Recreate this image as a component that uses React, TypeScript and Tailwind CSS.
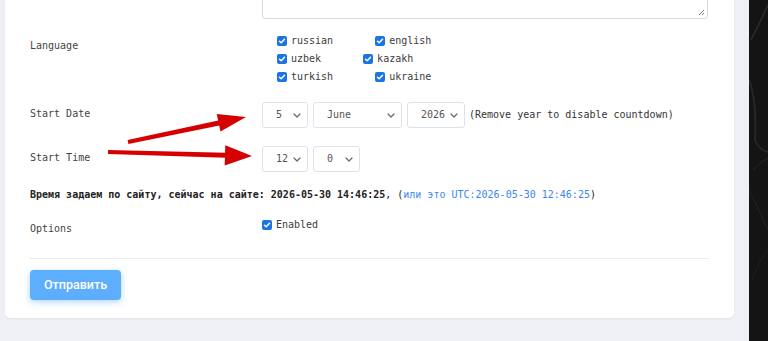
import React from "react";

function Check({ className = "" }: { className?: string }) {
  return (
    <span className={"inline-flex items-center justify-center w-[10px] h-[10px] rounded-[2px] bg-[#1b74e4] shrink-0 " + className}>
      <svg width="8" height="8" viewBox="0 0 8 8">
        <path d="M1.5 4.2 L3.2 5.8 L6.5 2.2" fill="none" stroke="#fff" strokeWidth="1.5" strokeLinecap="round" strokeLinejoin="round" />
      </svg>
    </span>
  );
}

function CheckItem({ label }: { label: string }) {
  return (
    <span className="inline-flex items-center gap-[4px]">
      <Check />
      <span className="leading-[12px] text-[#3c3c3c]">{label}</span>
    </span>
  );
}

function Chevron() {
  return (
    <svg width="8" height="5" viewBox="0 0 8 5" className="shrink-0">
      <path d="M1 1 L4 4 L7 1" fill="none" stroke="#666" strokeWidth="1.2" strokeLinecap="round" strokeLinejoin="round" />
    </svg>
  );
}

function Select({ value, w }: { value: string; w: string }) {
  return (
    <div className={"h-[26px] border border-[#dde2ea] rounded-[3px] bg-white flex items-center justify-between pl-[13px] pr-[6px] text-[#555] " + w}>
      <span className="leading-[12px]">{value}</span>
      <Chevron />
    </div>
  );
}

export default function App() {
  return (
    <div className="relative w-[768px] h-[341px] overflow-hidden bg-[#eff0f5] flex font-['DejaVu_Sans_Mono',monospace] text-[10px] text-[#444]">
      <div className="w-[749px] pl-[5px] pr-[15px] shrink-0">
        <div className="-mt-[60px] bg-white rounded-[5px] pt-[20px] pb-[18px] px-[25px] shadow-[0_1px_2px_rgba(0,0,0,0.05)]">
          {/* textarea row */}
          <div className="flex">
            <div className="w-[232px] shrink-0" />
            <div className="relative h-[59px] flex-1 mr-[1px] border border-[#d3dbe6] rounded-[3px]">
              <svg width="7" height="7" viewBox="0 0 7 7" className="absolute right-[2px] bottom-[2px]">
                <path d="M6 1 L1 6 M6 4 L4 6" stroke="#777" strokeWidth="1" />
              </svg>
            </div>
          </div>

          {/* language */}
          <div className="flex mt-[13px]">
            <div className="w-[232px] shrink-0 pt-[8px] leading-[12px]">Language</div>
            <div className="pl-[15px] flex flex-col">
              <div className="h-[18px] flex items-center gap-[42px]">
                <CheckItem label="russian" />
                <CheckItem label="english" />
              </div>
              <div className="h-[18px] flex items-center gap-[42px]">
                <CheckItem label="uzbek" />
                <CheckItem label="kazakh" />
              </div>
              <div className="h-[18px] flex items-center gap-[42px]">
                <CheckItem label="turkish" />
                <CheckItem label="ukraine" />
              </div>
            </div>
          </div>

          {/* start date */}
          <div className="flex items-center mt-[16px]">
            <div className="w-[232px] shrink-0 leading-[12px] -mt-[2px]">Start Date</div>
            <div className="flex items-center gap-[5px]">
              <Select value="5" w="w-[46px]" />
              <Select value="June" w="w-[89px]" />
              <Select value="2026" w="w-[58px]" />
            </div>
            <span className="ml-[4px] leading-[12px] text-[#333]">(Remove year to disable countdown)</span>
          </div>

          {/* start time */}
          <div className="flex items-center mt-[18px]">
            <div className="w-[232px] shrink-0 leading-[12px] -mt-[2px]">Start Time</div>
            <div className="flex items-center gap-[5px]">
              <Select value="12" w="w-[46px]" />
              <Select value="0" w="w-[47px]" />
            </div>
          </div>

          {/* time note */}
          <div className="mt-[16px] leading-[14px] text-[#222]">
            <b className="font-bold">Время задаем по сайту, сейчас на сайте: 2026-05-30 14:46:25</b>
            <span>, (</span>
            <span className="text-[#3b86f0]">или это UTC:2026-05-30 12:46:25</span>
            <span>)</span>
          </div>

          {/* options */}
          <div className="flex mt-[17px]">
            <div className="w-[232px] shrink-0 pt-[4px] leading-[12px]">Options</div>
            <div className="h-[12px] flex items-center gap-[4px]">
              <Check />
              <span className="leading-[12px] text-[#3c3c3c]">Enabled</span>
            </div>
          </div>

          <div className="mt-[23px] border-t border-[#e9ebf0]" />

          <button className="mt-[11px] w-[91px] h-[30px] rounded-[4px] bg-[#5eaefe] text-white text-[12.5px] font-medium font-['Roboto',sans-serif] shadow-[0_2px_6px_rgba(80,160,255,0.45)]">
            Отправить
          </button>
        </div>
      </div>

      <div className="flex-1 bg-[#141414] relative overflow-hidden">
        <svg width="19" height="341" viewBox="0 0 19 341" className="absolute inset-0">
          <path d="M2 40 Q 12 20 19 5" stroke="#2c2c2c" strokeWidth="1.5" fill="none" />
          <path d="M0 80 Q 8 100 6 140 Q 10 150 19 152" stroke="#262626" strokeWidth="2" fill="none" />
          <path d="M4 170 Q 14 160 19 158" stroke="#2a2a2a" strokeWidth="1" fill="none" />
          <path d="M0 190 Q 10 210 19 230" stroke="#242424" strokeWidth="1" fill="none" />
          <path d="M3 280 Q 10 260 19 250" stroke="#1f1f1f" strokeWidth="1" fill="none" />
        </svg>
      </div>

      {/* annotation arrows */}
      <svg width="768" height="341" viewBox="0 0 768 341" className="absolute inset-0 pointer-events-none">
        <polygon points="128.4,144 127.6,140 219.5,120.3 220.5,125.3" fill="#d60000" />
        <polygon points="246,117 216.7,114 220.5,131.6" fill="#d60000" />
        <polygon points="108,150 108,154 226,157.8 226,152.8" fill="#d60000" />
        <polygon points="252,156 225.3,145.3 224.7,165.5" fill="#d60000" />
      </svg>
    </div>
  );
}
